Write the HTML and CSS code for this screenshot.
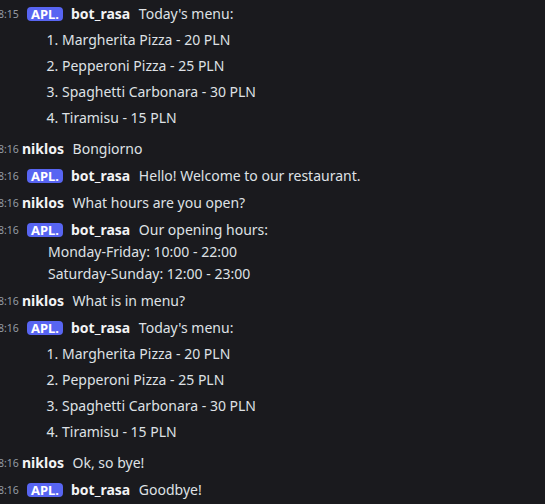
FILE: index.html
```html
<!DOCTYPE html>
<html lang="en">
<head>
<meta charset="utf-8">
<title>Chat</title>
<link rel="stylesheet" href="styles.css">
</head>
<body>
<div class="chat">
  <div class="msg">
    <div class="line"><span class="time">8:15</span><span class="badge">APL.</span><span class="name">bot_rasa</span> <span class="text">Today's menu:</span></div>
    <ol class="list">
      <li>Margherita Pizza - 20 PLN</li>
      <li>Pepperoni Pizza - 25 PLN</li>
      <li>Spaghetti Carbonara - 30 PLN</li>
      <li>Tiramisu - 15 PLN</li>
    </ol>
  </div>
  <div class="msg">
    <div class="line"><span class="time">8:16</span><span class="name user">niklos</span> <span class="text">Bongiorno</span></div>
  </div>
  <div class="msg">
    <div class="line"><span class="time">8:16</span><span class="badge">APL.</span><span class="name">bot_rasa</span> <span class="text">Hello! Welcome to our restaurant.</span></div>
  </div>
  <div class="msg">
    <div class="line"><span class="time">8:16</span><span class="name user">niklos</span> <span class="text">What hours are you open?</span></div>
  </div>
  <div class="msg">
    <div class="line"><span class="time">8:16</span><span class="badge">APL.</span><span class="name">bot_rasa</span> <span class="text">Our opening hours:</span></div>
    <div class="cont">Monday-Friday: 10:00 - 22:00</div>
    <div class="cont">Saturday-Sunday: 12:00 - 23:00</div>
  </div>
  <div class="msg">
    <div class="line"><span class="time">8:16</span><span class="name user">niklos</span> <span class="text">What is in menu?</span></div>
  </div>
  <div class="msg">
    <div class="line"><span class="time">8:16</span><span class="badge">APL.</span><span class="name">bot_rasa</span> <span class="text">Today's menu:</span></div>
    <ol class="list">
      <li>Margherita Pizza - 20 PLN</li>
      <li>Pepperoni Pizza - 25 PLN</li>
      <li>Spaghetti Carbonara - 30 PLN</li>
      <li>Tiramisu - 15 PLN</li>
    </ol>
  </div>
  <div class="msg">
    <div class="line"><span class="time">8:16</span><span class="name user">niklos</span> <span class="text">Ok, so bye!</span></div>
  </div>
  <div class="msg">
    <div class="line"><span class="time">8:16</span><span class="badge">APL.</span><span class="name">bot_rasa</span> <span class="text">Goodbye!</span></div>
  </div>
</div>
</body>
</html>
```

FILE: styles.css
```css
html, body {
  margin: 0;
  padding: 0;
  background: #1a1a1e;
  height: 100%;
}
body {
  font-family: "Noto Sans", "Open Sans", sans-serif;
  font-size: 14px;
  line-height: 22px;
  color: #dfe1e5;
  overflow: hidden;
}
.chat {
  padding-top: 3px;
  display: flex;
  flex-direction: column;
  gap: 5px;
}
.line {
  white-space: nowrap;
}
.time {
  display: inline-block;
  width: 22px;
  margin-left: -2px;
  font-size: 10.5px;
  color: #949ba4;
  vertical-align: top;
}
.badge {
  display: inline-block;
  height: 14px;
  line-height: 14px;
  margin: 4px 8px 0 7px;
  padding: 0 4px;
  border-radius: 4px;
  background: #5865f2;
  color: #ffffff;
  font-size: 13px;
  font-weight: 700;
  vertical-align: top;
}
.name {
  font-weight: 700;
  color: #f2f3f5;
  margin-right: 5px;
}
.name.user {
  margin-left: 2px;
}
.cont {
  padding-left: 48px;
}
.list {
  margin: 4px 0 0 0;
  padding-left: 62px;
}
.list li {
  margin-bottom: 4px;
}
```
